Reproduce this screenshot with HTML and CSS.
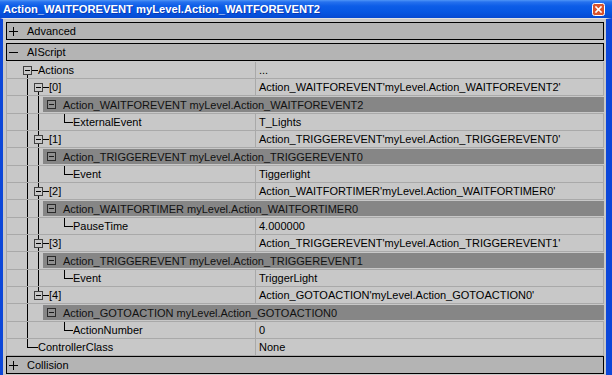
FILE: index.html
```html
<!DOCTYPE html>
<html>
<head>
  <title>Action_WAITFOREVENT myLevel.Action_WAITFOREVENT2</title>
  <link rel="stylesheet" href="styles.css">
</head>
<body>
  <div class="titlebar">
    <span class="title">Action_WAITFOREVENT myLevel.Action_WAITFOREVENT2</span>
    <span class="close">
      <svg width="13" height="13" viewBox="0 0 13 13">
        <rect x="0.5" y="0.5" width="12" height="12" rx="2" fill="#d9532c" stroke="#fff"/>
        <path d="M4 4 L9 9 M9 4 L4 9" stroke="#fff" stroke-width="1.6" stroke-linecap="square"/>
      </svg>
    </span>
  </div>
  <div class="frame">
    <div class="cat"><span class="cat-icon plus"></span>Advanced</div>
    <div class="cat last"><span class="cat-icon minus"></span>AIScript</div>

    <div class="props">
      <div class="row">
        <div class="name"><span class="sp16"></span><span class="exp root"><span class="box"></span></span>Actions</div>
        <div class="value">...</div>
      </div>

      <div class="row">
        <div class="name"><span class="v0"></span><span class="exp down"><span class="box"></span></span>[0]</div>
        <div class="value">Action_WAITFOREVENT'myLevel.Action_WAITFOREVENT2'</div>
      </div>
      <div class="row head">
        <span class="v0"></span><span class="v1"></span>
        <div class="band"><span class="box dark"></span>Action_WAITFOREVENT myLevel.Action_WAITFOREVENT2</div>
      </div>
      <div class="row">
        <div class="name"><span class="v0"></span><span class="v1"></span><span class="leaf"></span>ExternalEvent</div>
        <div class="value">T_Lights</div>
      </div>

      <div class="row">
        <div class="name"><span class="v0"></span><span class="exp up down"><span class="box"></span></span>[1]</div>
        <div class="value">Action_TRIGGEREVENT'myLevel.Action_TRIGGEREVENT0'</div>
      </div>
      <div class="row head">
        <span class="v0"></span><span class="v1"></span>
        <div class="band"><span class="box dark"></span>Action_TRIGGEREVENT myLevel.Action_TRIGGEREVENT0</div>
      </div>
      <div class="row">
        <div class="name"><span class="v0"></span><span class="v1"></span><span class="leaf"></span>Event</div>
        <div class="value">Tiggerlight</div>
      </div>

      <div class="row">
        <div class="name"><span class="v0"></span><span class="exp up down"><span class="box"></span></span>[2]</div>
        <div class="value">Action_WAITFORTIMER'myLevel.Action_WAITFORTIMER0'</div>
      </div>
      <div class="row head">
        <span class="v0"></span><span class="v1"></span>
        <div class="band"><span class="box dark"></span>Action_WAITFORTIMER myLevel.Action_WAITFORTIMER0</div>
      </div>
      <div class="row">
        <div class="name"><span class="v0"></span><span class="v1"></span><span class="leaf"></span>PauseTime</div>
        <div class="value">4.000000</div>
      </div>

      <div class="row">
        <div class="name"><span class="v0"></span><span class="exp up down"><span class="box"></span></span>[3]</div>
        <div class="value">Action_TRIGGEREVENT'myLevel.Action_TRIGGEREVENT1'</div>
      </div>
      <div class="row head">
        <span class="v0"></span><span class="v1"></span>
        <div class="band"><span class="box dark"></span>Action_TRIGGEREVENT myLevel.Action_TRIGGEREVENT1</div>
      </div>
      <div class="row">
        <div class="name"><span class="v0"></span><span class="v1"></span><span class="leaf"></span>Event</div>
        <div class="value">TriggerLight</div>
      </div>

      <div class="row">
        <div class="name"><span class="v0"></span><span class="exp up"><span class="box"></span></span>[4]</div>
        <div class="value">Action_GOTOACTION'myLevel.Action_GOTOACTION0'</div>
      </div>
      <div class="row head">
        <span class="v0"></span><span class="v1 none"></span>
        <div class="band"><span class="box dark"></span>Action_GOTOACTION myLevel.Action_GOTOACTION0</div>
      </div>
      <div class="row">
        <div class="name"><span class="v0"></span><span class="v1 none"></span><span class="leaf"></span>ActionNumber</div>
        <div class="value">0</div>
      </div>

      <div class="row">
        <div class="name"><span class="corner0"></span>ControllerClass</div>
        <div class="value">None</div>
      </div>
    </div>

    <div class="cat"><span class="cat-icon plus"></span>Collision</div>
  </div>
</body>
</html>
```

FILE: styles.css
```css
:root {
  --xp-blue: #0c47d9;
  --panel: #c8c8c8;
  --sep: #a9a9a9;
  --line: linear-gradient(#000, #000);
}

body {
  margin: 0;
  width: 612px;
  height: 375px;
  overflow: hidden;
  background: var(--panel);
  font-family: "Liberation Sans", Arial, sans-serif;
  font-size: 11px;
  color: #000;
}

/* caption */
.titlebar {
  height: 18px;
  display: flex;
  align-items: center;
  justify-content: space-between;
  padding: 0 7px 0 3px;
  background: linear-gradient(#4f95f7 0, #2671ee 2px, #0d5de7 6px, #0656e2 12px, #0549d2 100%);
}

.title {
  color: #fff;
  font-weight: bold;
  font-size: 11.2px;
  text-shadow: 1px 1px 0 rgba(10, 30, 140, 0.5);
}

.close {
  display: flex;
  width: 13px;
  height: 13px;
}

.frame {
  border-left: 3px solid var(--xp-blue);
  border-right: 6px solid var(--xp-blue);
  border-top: 1px solid #e2e2e2;
  padding: 3px 2px 0 3px;
  height: 360px;
}

/* category bars */
.cat {
  height: 16px;
  border: 1px solid #000;
  background: #b4b4b4;
  display: flex;
  align-items: center;
  padding-left: 2px;
  margin-bottom: 3px;
}

.cat.last {
  margin-bottom: 1px;
}

.cat-icon {
  width: 9px;
  height: 9px;
  margin-right: 9px;
  background: var(--line) 0 4px / 9px 1px no-repeat;
}

.cat-icon.plus {
  background:
    var(--line) 0 4px / 9px 1px no-repeat,
    var(--line) 4px 0 / 1px 9px no-repeat;
}

/* property rows */
.row {
  display: flex;
  height: 16px;
  line-height: 16px;
  border-left: 1px solid var(--sep);
  border-right: 1px solid var(--sep);
  border-bottom: 1px solid var(--sep);
}

.row.head {
  height: 17px;
  border-right: none;
}

.name {
  width: 248px;
  flex: none;
  display: flex;
  border-right: 1px solid var(--sep);
  white-space: nowrap;
}

.value {
  flex: 1;
  padding-left: 3px;
  white-space: nowrap;
  overflow: hidden;
}

/* tree lines */
.sp16 {
  width: 16px;
  flex: none;
}

.v0 {
  width: 27px;
  flex: none;
  background: var(--line) 20px 0 / 1px 100% no-repeat;
}

.v1 {
  width: 9px;
  flex: none;
  background: var(--line) 4px 0 / 1px 100% no-repeat;
}

.v1.none {
  background: none;
}

.leaf {
  width: 30px;
  flex: none;
  background:
    var(--line) 21px 0 / 1px 9px no-repeat,
    var(--line) 21px 8px / 9px 1px no-repeat;
}

.corner0 {
  width: 31px;
  flex: none;
  background:
    var(--line) 20px 0 / 1px 9px no-repeat,
    var(--line) 20px 8px / 11px 1px no-repeat;
}

.exp {
  width: 15px;
  flex: none;
  display: flex;
  align-items: flex-start;
  background: var(--line) 9px 8px / 6px 1px no-repeat;
}

.exp.root,
.exp.down {
  background:
    var(--line) 9px 8px / 6px 1px no-repeat,
    var(--line) 4px 12px / 1px 5px no-repeat;
}

.exp.up {
  background:
    var(--line) 9px 8px / 6px 1px no-repeat,
    var(--line) 4px 0 / 1px 4px no-repeat;
}

.exp.up.down {
  background:
    var(--line) 9px 8px / 6px 1px no-repeat,
    var(--line) 4px 0 / 1px 100% no-repeat;
}

.box {
  width: 7px;
  height: 7px;
  margin-top: 4px;
  border: 1px solid #404040;
  background: var(--line) 1px 3px / 5px 1px no-repeat, var(--panel);
  flex: none;
}

/* object header band */
.band {
  flex: 1;
  display: flex;
  align-items: center;
  margin: 1px 0;
  padding-left: 4px;
  background: #868686;
  color: #111;
  white-space: nowrap;
  overflow: hidden;
}

.box.dark {
  margin-top: 0;
  margin-right: 7px;
  border-color: #2a2a2a;
  background: linear-gradient(#1a1a1a, #1a1a1a) 1px 3px / 5px 1px no-repeat, #909090;
}
```
